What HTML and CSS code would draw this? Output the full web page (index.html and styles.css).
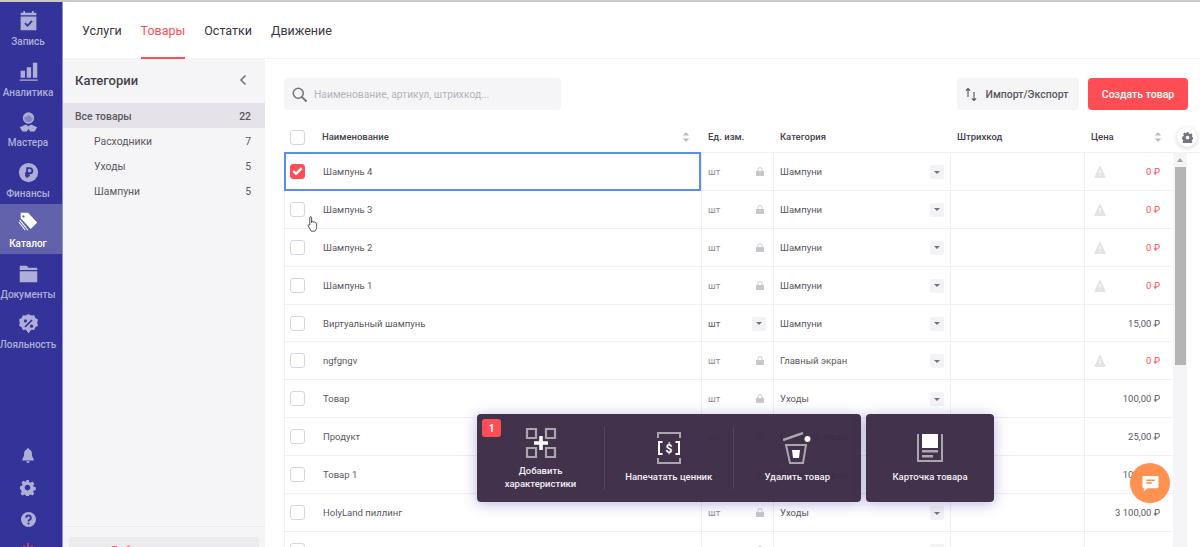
FILE: index.html
```html
<!DOCTYPE html>
<html lang="ru">
  <head>
    <meta charset="UTF-8" />
    <title>Каталог</title>
    <link rel="stylesheet" href="styles.css">
  </head>
  <body>
    <div class="app">
      <!-- Left navigation -->
      <nav class="sidebar">
        <a class="nav-item">
          <svg viewBox="0 0 24 24" width="21" height="21"><path fill="currentColor" d="M6 1h2v2h8V1h2v2h3v3H3V3h3zM3 7.500h18V23H3z"/><path fill="none" stroke="#333399" stroke-width="2" d="M8 15l3 3 5-5.500"/></svg>
          <span>Запись</span>
        </a>
        <a class="nav-item">
          <svg viewBox="0 0 24 24" width="21" height="21"><path fill="currentColor" d="M3 11h5v8H3zM10 7h5v12h-5zM17 2h5v17h-5zM2 21h20.500v1.500H2z"/></svg>
          <span>Аналитика</span>
        </a>
        <a class="nav-item">
          <svg viewBox="0 0 24 24" width="21" height="21"><circle fill="currentColor" cx="12" cy="8" r="6.500"/><path fill="#333399" d="M7 7c2 0 4-1 5-3 1 2 3 3 5 3 0 3-2 5.500-5 5.500S7 10 7 7z" opacity=".35"/><path fill="currentColor" d="M9 15.500l3 2 3-2 7 3-3 5h-5l-2-3-2 3H5l-3-5z"/></svg>
          <span>Мастера</span>
        </a>
        <a class="nav-item">
          <svg viewBox="0 0 24 24" width="21" height="21"><circle fill="currentColor" cx="12" cy="12" r="11"/><path fill="none" stroke="#333399" stroke-width="2.200" d="M10.500 18V7h3a2.800 2.800 0 0 1 0 5.800H8M8 15.500h5.500"/></svg>
          <span>Финансы</span>
        </a>
        <a class="nav-item active">
          <svg viewBox="0 0 24 24" width="22" height="22"><path fill="currentColor" d="M4 2h8l10 10.500-7 7L4 8zM7 4.500a1.300 1.300 0 1 0 .1 0z"/><path fill="none" stroke="currentColor" stroke-width="1.200" d="M3 10l9 11M2 12l7 9"/></svg>
          <span>Каталог</span>
        </a>
        <a class="nav-item">
          <svg viewBox="0 0 24 24" width="21" height="21"><path fill="currentColor" d="M2 3h8l2 2.500h10V8H2zM2 9.500h20V22H2z"/></svg>
          <span>Документы</span>
        </a>
        <a class="nav-item">
          <svg viewBox="0 0 24 24" width="21" height="21"><path fill="currentColor" d="M12 1l3 1.800 3.500-.3 1.300 3.200 3 1.800-.8 3.500.8 3.500-3 1.800-1.300 3.200-3.500-.3L12 23l-3-3.800-3.500.3-1.300-3.200-3-1.800.8-3.500-.8-3.500 3-1.800 1.300-3.200 3.500.3z"/><path fill="none" stroke="#333399" stroke-width="2" d="M8 16l8-8"/><circle fill="#333399" cx="8.500" cy="9" r="1.800"/><circle fill="#333399" cx="15.500" cy="15" r="1.800"/></svg>
          <span>Лояльность</span>
        </a>
        <div class="nav-bottom">
          <svg viewBox="0 0 16 18" width="14" height="16"><path fill="currentColor" d="M8 0a1.500 1.500 0 0 1 1.500 1.500C12 2.300 12.500 4.500 12.500 7c0 2.500.8 3.500 2 5v2h-13v-2c1.200-1.500 2-2.500 2-5 0-2.500.5-4.700 3-5.500A1.500 1.500 0 0 1 8 0zM6 15h4a2 2 0 0 1-4 0z"/></svg>
          <svg viewBox="0 0 16 16" width="16" height="16"><path fill="currentColor" fill-rule="evenodd" d="M6.500 0h3l.4 2.200 1.500.7 2-1.200 2 2.200-1.200 1.900.6 1.500 2.200.5v3l-2.200.4-.6 1.500 1.200 2-2 2-2-1.200-1.500.6-.4 2.300h-3l-.4-2.300-1.500-.6-2 1.200-2-2 1.200-2-.6-1.500L0 9.800v-3l2.200-.5.6-1.500-1.200-1.900 2-2.200 2 1.200 1.500-.7zM8 5.200a3 3 0 1 0 .1 0z" transform="scale(.93)"/></svg>
          <svg viewBox="0 0 16 16" width="15" height="15"><circle fill="currentColor" cx="8" cy="8" r="8"/><path fill="none" stroke="#333399" stroke-width="2" d="M5.500 6.200a2.500 2.500 0 1 1 3.600 2.200c-.8.400-1.100.8-1.100 1.700"/><circle fill="#333399" cx="8" cy="12.300" r="1.100"/></svg>
          <svg viewBox="0 0 16 16" width="14" height="14"><path fill="none" stroke="#ff4d55" stroke-width="1.500" d="M8 0v7M3.500 3v6M12.500 3v6"/></svg>
        </div>
      </nav>

      <div class="content">
        <!-- Top tabs -->
        <header class="tabs">
          <a class="tab">Услуги</a>
          <a class="tab selected">Товары</a>
          <a class="tab">Остатки</a>
          <a class="tab">Движение</a>
        </header>

        <div class="columns">
          <!-- Categories -->
          <aside class="categories">
            <div class="cat-head">
              <h2>Категории</h2>
              <svg viewBox="0 0 10 12" width="10" height="12"><path fill="none" stroke="#77747f" stroke-width="1.600" d="M7.500 1.500L3 6l4.500 4.500"/></svg>
            </div>
            <ul class="cat-list">
              <li class="cat all"><span>Все товары</span><span>22</span></li>
              <li class="cat"><span>Расходники</span><span>7</span></li>
              <li class="cat"><span>Уходы</span><span>5</span></li>
              <li class="cat"><span>Шампуни</span><span>5</span></li>
            </ul>
            <div class="cat-foot"><div class="cat-add">Добавить категорию</div></div>
          </aside>

          <!-- Goods table -->
          <main class="goods">
            <div class="toolbar">
              <label class="search">
                <svg viewBox="0 0 18 18" width="15" height="15"><circle fill="none" stroke="#77747f" stroke-width="1.900" cx="7.500" cy="7.500" r="6"/><path stroke="#77747f" stroke-width="2.400" d="M11.500 11.500l6 6"/></svg>
                <span>Наименование, артикул, штрихкод...</span>
              </label>
              <div class="actions">
                <button class="btn-light">
                  <svg viewBox="0 0 14 16" width="12" height="15"><path fill="none" stroke="#55525c" stroke-width="1.300" d="M3.500 11V1M1 3.500L3.500 1 6 3.500M10.500 5v10M8 12.500l2.500 2.500 2.500-2.500"/></svg>
                  Импорт/Экспорт
                </button>
                <button class="btn-red">Создать товар</button>
              </div>
            </div>

            <div class="table-wrap">
              <div class="thead row-grid">
                <div class="cell name-cell"><i class="check"></i><b>Наименование</b>
                  <svg class="sort" viewBox="0 0 8 12" width="8" height="12"><path fill="#b9b7be" d="M4 1l3 3.500H1zM4 11l3-3.500H1z"/></svg>
                </div>
                <div class="cell"><b>Ед. изм.</b></div>
                <div class="cell"><b>Категория</b></div>
                <div class="cell"><b>Штрихкод</b></div>
                <div class="cell"><b>Цена</b>
                  <svg class="sort" viewBox="0 0 8 12" width="8" height="12"><path fill="#b9b7be" d="M4 1l3 3.500H1zM4 11l3-3.500H1z"/></svg>
                </div>
              </div>

              <div class="tbody">
                <div class="row row-grid focused">
                  <div class="cell name-cell"><i class="check on"><svg viewBox="0 0 14 14" width="14" height="14"><path fill="none" stroke="#fff" stroke-width="2.600" d="M2.500 7l3 3 6-6"/></svg></i>Шампунь 4</div>
                  <div class="cell unit locked">шт<svg class="lock" viewBox="0 0 8 9" width="8" height="9"><path fill="#c9c7cd" d="M0 4h8v5H0z"/><path fill="none" stroke="#c9c7cd" d="M2 4V2.500a2 2 0 0 1 4 0V4"/></svg></div>
                  <div class="cell">Шампуни<i class="drop"></i></div>
                  <div class="cell"></div>
                  <div class="cell price zero"><svg class="warn" viewBox="0 0 12 13" width="12" height="13"><path fill="#e4e2e7" d="M6 0l6 13H0z"/><path fill="#fff" d="M5.500 5h1v4h-1zM5.500 10h1v1h-1z"/></svg>0 ₽</div>
                </div>
                <div class="row row-grid">
                  <div class="cell name-cell"><i class="check"></i>Шампунь 3</div>
                  <div class="cell unit locked">шт<svg class="lock" viewBox="0 0 8 9" width="8" height="9"><path fill="#c9c7cd" d="M0 4h8v5H0z"/><path fill="none" stroke="#c9c7cd" d="M2 4V2.500a2 2 0 0 1 4 0V4"/></svg></div>
                  <div class="cell">Шампуни<i class="drop"></i></div>
                  <div class="cell"></div>
                  <div class="cell price zero"><svg class="warn" viewBox="0 0 12 13" width="12" height="13"><path fill="#e4e2e7" d="M6 0l6 13H0z"/><path fill="#fff" d="M5.500 5h1v4h-1zM5.500 10h1v1h-1z"/></svg>0 ₽</div>
                </div>
                <div class="row row-grid">
                  <div class="cell name-cell"><i class="check"></i>Шампунь 2</div>
                  <div class="cell unit locked">шт<svg class="lock" viewBox="0 0 8 9" width="8" height="9"><path fill="#c9c7cd" d="M0 4h8v5H0z"/><path fill="none" stroke="#c9c7cd" d="M2 4V2.500a2 2 0 0 1 4 0V4"/></svg></div>
                  <div class="cell">Шампуни<i class="drop"></i></div>
                  <div class="cell"></div>
                  <div class="cell price zero"><svg class="warn" viewBox="0 0 12 13" width="12" height="13"><path fill="#e4e2e7" d="M6 0l6 13H0z"/><path fill="#fff" d="M5.500 5h1v4h-1zM5.500 10h1v1h-1z"/></svg>0 ₽</div>
                </div>
                <div class="row row-grid">
                  <div class="cell name-cell"><i class="check"></i>Шампунь 1</div>
                  <div class="cell unit locked">шт<svg class="lock" viewBox="0 0 8 9" width="8" height="9"><path fill="#c9c7cd" d="M0 4h8v5H0z"/><path fill="none" stroke="#c9c7cd" d="M2 4V2.500a2 2 0 0 1 4 0V4"/></svg></div>
                  <div class="cell">Шампуни<i class="drop"></i></div>
                  <div class="cell"></div>
                  <div class="cell price zero"><svg class="warn" viewBox="0 0 12 13" width="12" height="13"><path fill="#e4e2e7" d="M6 0l6 13H0z"/><path fill="#fff" d="M5.500 5h1v4h-1zM5.500 10h1v1h-1z"/></svg>0 ₽</div>
                </div>
                <div class="row row-grid">
                  <div class="cell name-cell"><i class="check"></i>Виртуальный шампунь</div>
                  <div class="cell unit">шт<i class="drop"></i></div>
                  <div class="cell">Шампуни<i class="drop"></i></div>
                  <div class="cell"></div>
                  <div class="cell price">15,00 ₽</div>
                </div>
                <div class="row row-grid">
                  <div class="cell name-cell"><i class="check"></i>ngfgngv</div>
                  <div class="cell unit locked">шт<svg class="lock" viewBox="0 0 8 9" width="8" height="9"><path fill="#c9c7cd" d="M0 4h8v5H0z"/><path fill="none" stroke="#c9c7cd" d="M2 4V2.500a2 2 0 0 1 4 0V4"/></svg></div>
                  <div class="cell">Главный экран<i class="drop"></i></div>
                  <div class="cell"></div>
                  <div class="cell price zero"><svg class="warn" viewBox="0 0 12 13" width="12" height="13"><path fill="#e4e2e7" d="M6 0l6 13H0z"/><path fill="#fff" d="M5.500 5h1v4h-1zM5.500 10h1v1h-1z"/></svg>0 ₽</div>
                </div>
                <div class="row row-grid">
                  <div class="cell name-cell"><i class="check"></i>Товар</div>
                  <div class="cell unit locked">шт<svg class="lock" viewBox="0 0 8 9" width="8" height="9"><path fill="#c9c7cd" d="M0 4h8v5H0z"/><path fill="none" stroke="#c9c7cd" d="M2 4V2.500a2 2 0 0 1 4 0V4"/></svg></div>
                  <div class="cell">Уходы<i class="drop"></i></div>
                  <div class="cell"></div>
                  <div class="cell price">100,00 ₽</div>
                </div>
                <div class="row row-grid">
                  <div class="cell name-cell"><i class="check"></i>Продукт</div>
                  <div class="cell unit locked">шт<svg class="lock" viewBox="0 0 8 9" width="8" height="9"><path fill="#c9c7cd" d="M0 4h8v5H0z"/><path fill="none" stroke="#c9c7cd" d="M2 4V2.500a2 2 0 0 1 4 0V4"/></svg></div>
                  <div class="cell">Главный экран<i class="drop"></i></div>
                  <div class="cell"></div>
                  <div class="cell price">25,00 ₽</div>
                </div>
                <div class="row row-grid">
                  <div class="cell name-cell"><i class="check"></i>Товар 1</div>
                  <div class="cell unit locked">шт<svg class="lock" viewBox="0 0 8 9" width="8" height="9"><path fill="#c9c7cd" d="M0 4h8v5H0z"/><path fill="none" stroke="#c9c7cd" d="M2 4V2.500a2 2 0 0 1 4 0V4"/></svg></div>
                  <div class="cell">Главный экран<i class="drop"></i></div>
                  <div class="cell"></div>
                  <div class="cell price">100,00 ₽</div>
                </div>
                <div class="row row-grid">
                  <div class="cell name-cell"><i class="check"></i>HolyLand пиллинг</div>
                  <div class="cell unit locked">шт<svg class="lock" viewBox="0 0 8 9" width="8" height="9"><path fill="#c9c7cd" d="M0 4h8v5H0z"/><path fill="none" stroke="#c9c7cd" d="M2 4V2.500a2 2 0 0 1 4 0V4"/></svg></div>
                  <div class="cell">Уходы<i class="drop"></i></div>
                  <div class="cell"></div>
                  <div class="cell price">3 100,00 ₽</div>
                </div>
                <div class="row row-grid">
                  <div class="cell name-cell"><i class="check"></i>HolyLand крем-масло</div>
                  <div class="cell unit locked">шт<svg class="lock" viewBox="0 0 8 9" width="8" height="9"><path fill="#c9c7cd" d="M0 4h8v5H0z"/><path fill="none" stroke="#c9c7cd" d="M2 4V2.500a2 2 0 0 1 4 0V4"/></svg></div>
                  <div class="cell">Уходы<i class="drop"></i></div>
                  <div class="cell"></div>
                  <div class="cell price">1 000,00 ₽</div>
                </div>
              </div>

              <div class="scrollbar"><i class="scroll-up"></i><i class="scroll-thumb"></i></div>
            </div>
          </main>
        </div>
      </div>
    </div>

    <!-- Things floating above the table -->
    <div class="gear-btn"><svg viewBox="0 0 16 16" width="11" height="11"><path fill="#77747f" fill-rule="evenodd" d="M6.500 0h3l.4 2.200 1.500.7 2-1.200 2 2.200-1.200 1.900.6 1.500 2.200.5v3l-2.200.4-.6 1.500 1.200 2-2 2-2-1.200-1.500.6-.4 2.300h-3l-.4-2.300-1.500-.6-2 1.200-2-2 1.200-2-.6-1.500L0 9.800v-3l2.200-.5.6-1.500-1.200-1.900 2-2.200 2 1.200 1.500-.7zM8 5.500a2.600 2.600 0 1 0 .1 0z"/></svg></div>

    <svg class="cursor" viewBox="0 0 12 17" width="11" height="16"><path fill="#fff" stroke="#333" stroke-width=".9" d="M3 1.500a1 1 0 0 1 2 0V7l.2-1.300a1 1 0 0 1 1.600.3l.2.700.3-.3a1 1 0 0 1 1.500.5l.1.400a1 1 0 0 1 1.600.8V12c0 2-1 3-1.600 4.300H4.500L1.300 10.500c-.6-1 .5-2 1.700-.8z"/></svg>

    <div class="popup">
      <div class="popup-panel">
        <span class="count">1</span>
        <div class="action wide">
          <svg viewBox="0 0 32 32" width="32" height="32"><path fill="none" stroke="#aaa6ad" stroke-width="2.200" d="M2 2h9v9H2zM21 2h9v9h-9zM2 21h9v9H2zM21 21h9v9h-9z"/><path stroke="#fff" stroke-width="3.600" d="M16 9v14M9 16h14"/></svg>
          <span>Добавить характеристики</span>
        </div>
        <div class="action">
          <svg viewBox="0 0 24 32" width="24" height="32"><path fill="none" stroke="#aaa6ad" stroke-width="2" d="M1 6V1h22v5M1 26v5h22v-5"/><path fill="none" stroke="#fff" stroke-width="2" d="M5.500 10H2v12h3.500M18.500 10H22v12h-3.500"/><text x="12" y="20.500" class="dollar">$</text></svg>
          <span>Напечатать ценник</span>
        </div>
        <div class="action">
          <svg viewBox="0 0 28 32" width="28" height="32"><path fill="none" stroke="#aaa6ad" stroke-width="2" d="M3 13h20l-3 18H7z"/><path stroke="#aaa6ad" stroke-width="2.400" d="M0 8L20 1"/><path fill="#fff" d="M9 18h8l-1 8h-6z"/><circle fill="#fff" cx="24.500" cy="7" r="3"/></svg>
          <span>Удалить товар</span>
        </div>
      </div>
      <div class="popup-panel card">
        <div class="action">
          <svg viewBox="0 0 26 32" width="26" height="32"><path fill="none" stroke="#aaa6ad" stroke-width="2" d="M1 2v27h24V2"/><path fill="#fff" d="M5 2h16v14H5z"/><path fill="#aaa6ad" d="M5 18h16v2.500H5zM5 23h11v2.500H5z"/></svg>
          <span>Карточка товара</span>
        </div>
      </div>
    </div>

    <div class="chat-btn"><svg viewBox="0 0 18 18" width="17" height="17"><path fill="#fff" d="M2 1h14a1.500 1.500 0 0 1 1.500 1.500v10A1.500 1.500 0 0 1 16 14H6l-4 3.500V14a1.500 1.500 0 0 1-1.500-1.500v-10A1.500 1.500 0 0 1 2 1z"/><path stroke="#ff8c4a" stroke-width="1.500" d="M4.500 5.500h9M4.500 8.500h6"/></svg></div>
  </body>
</html>
```

FILE: styles.css
```css
:root {
  --nav-bg: #333399;
  --nav-text: #aeaed8;
  --red: #ff4d55;
  --text: #5a5760;
  --line: #f1eef5;
  --panel: #f5f5f7;
}
* {
  box-sizing: border-box;
}
html,
body {
  margin: 0;
  height: 547px;
  overflow: hidden;
}
body {
  position: relative;
  font-family: Roboto, "Liberation Sans", sans-serif;
  font-size: 9.5px;
  color: var(--text);
  background: #fff;
}
.app {
  display: flex;
  height: 547px;
  border-top: 2px solid #c9c9c9;
}

/* Sidebar */
.sidebar {
  width: 63px;
  flex: none;
  display: flex;
  flex-direction: column;
  background: var(--nav-bg);
  color: var(--nav-text);
  border-right: 1px solid #8e8ec8;
}
.nav-item {
  height: 50.5px;
  flex: none;
  display: flex;
  flex-direction: column;
  align-items: center;
  justify-content: flex-end;
  gap: 5px;
  padding: 0 6px 5px 0;
  font-size: 10px;
  font-weight: 500;
  white-space: nowrap;
}
.nav-item svg {
  flex: none;
}
.nav-item:first-child {
  height: 50px;
}
.nav-item.active {
  background: #6262ac;
  color: #fff;
}
.nav-bottom {
  margin-top: auto;
  display: flex;
  flex-direction: column;
  align-items: center;
  gap: 16px;
  height: 100px;
  padding: 1px 6px 0 0;
}
.nav-bottom svg {
  flex: none;
}

/* Content */
.content {
  flex: 1;
  display: flex;
  flex-direction: column;
  min-width: 0;
}
.tabs {
  height: 57px;
  flex: none;
  display: flex;
  gap: 19px;
  padding-left: 19px;
  border-bottom: 1px solid #f2f2f4;
}
.tab {
  display: flex;
  align-items: center;
  height: 57px;
  padding-top: 2px;
  font-size: 12.5px;
  color: #3a3740;
  border-bottom: 2px solid transparent;
}
.tab.selected {
  color: var(--red);
  border-bottom-color: var(--red);
}
.columns {
  flex: 1;
  display: flex;
  min-height: 0;
}

/* Categories */
.categories {
  width: 202px;
  flex: none;
  display: flex;
  flex-direction: column;
  background: var(--panel);
}
.cat-head {
  height: 44px;
  flex: none;
  display: flex;
  align-items: center;
  justify-content: space-between;
  padding: 0 17px 2px 12px;
}
.cat-head h2 {
  margin: 0;
  font-size: 13px;
  font-weight: 500;
  color: #45424c;
}
.cat-list {
  list-style: none;
  margin: 0;
  padding: 0;
}
.cat {
  height: 25px;
  display: flex;
  align-items: center;
  justify-content: space-between;
  padding: 1px 14px 0 31px;
  font-size: 10.4px;
}
.cat.all {
  padding-left: 12px;
  background: #e5e3e9;
  font-weight: 500;
}
.cat-foot {
  margin-top: auto;
  height: 21px;
  flex: none;
  overflow: hidden;
  padding: 10px 6px 0;
  border-top: 1px solid #e9e9f2;
}
.cat-add {
  height: 24px;
  padding-top: 7px;
  border-radius: 4px;
  background: #ecebf0;
  color: var(--red);
  font-size: 11px;
  text-align: center;
}

/* Goods */
.goods {
  flex: 1;
  min-width: 0;
  padding: 19px 0 0 19px;
}
.toolbar {
  display: flex;
  justify-content: space-between;
  padding-right: 12px;
  height: 32px;
  margin-bottom: 13px;
}
.search {
  width: 277px;
  display: flex;
  align-items: center;
  gap: 7px;
  padding-left: 8px;
  border-radius: 4px;
  background: var(--panel);
  font-size: 10.3px;
  color: #b4b2ba;
}
.actions {
  display: flex;
  gap: 9px;
}
.actions button {
  height: 32px;
  border: none;
  border-radius: 4px;
  font-family: inherit;
  font-size: 10.5px;
  font-weight: 500;
}
.btn-light {
  width: 122px;
  display: flex;
  align-items: center;
  justify-content: center;
  gap: 8px;
  padding-right: 8px;
  background: var(--panel);
  color: var(--text);
}
.btn-red {
  width: 100px;
  background: var(--red);
  color: #fff;
}
.table-wrap {
  position: relative;
}
.row-grid {
  display: grid;
  grid-template-columns: 417px 72px 177px 134px 89px;
}
.thead {
  height: 30px;
  border-bottom: 1px solid var(--line);
}
.thead b {
  margin-top: -2px;
  font-weight: 500;
  color: #45424c;
}
.tbody {
  width: 889px;
}
.row {
  height: 37.9px;
  grid-template-columns: 416px 72px 177px 134px 89px;
  border-bottom: 1px solid var(--line);
  border-left: 1px solid var(--line);
}
.row.focused {
  position: relative;
}
.row.focused::before {
  content: "";
  box-sizing: border-box;
  position: absolute;
  left: -1px;
  top: -1px;
  width: 417px;
  height: 39px;
  border: 2px solid #5b8def;
}
.cell {
  position: relative;
  display: flex;
  align-items: center;
  min-width: 0;
  padding-left: 6px;
  border-left: 1px solid var(--line);
}
.thead .cell {
  padding-left: 7px;
  border-left: none;
}
.thead .cell.name-cell,
.cell.name-cell {
  padding-left: 5px;
  border-left: none;
}
.check {
  flex: none;
  width: 15px;
  height: 15px;
  margin-right: 18px;
  border: 1.5px solid #d6d4e2;
  border-radius: 3px;
  background: #fff;
}
.check.on {
  display: flex;
  align-items: center;
  justify-content: center;
  border-color: var(--red);
  background: var(--red);
}
.thead .check {
  margin: 0 17px 0 1px;
}
.sort {
  position: absolute;
  right: 11px;
  top: 8px;
}
.unit {
  color: #5a5760;
}
.unit.locked {
  color: #8d8a94;
}
.lock {
  position: absolute;
  right: 9px;
  top: 14px;
}
.drop {
  position: absolute;
  right: 6px;
  top: 12px;
  width: 14px;
  height: 14px;
  border-radius: 2px;
  background: #f3f2f5;
}
.unit .drop {
  right: 7px;
}
.drop::after {
  content: "";
  position: absolute;
  left: 3.5px;
  top: 5.5px;
  border: 3.5px solid transparent;
  border-top: 3.5px solid #77747f;
  border-bottom: none;
}
.price {
  justify-content: flex-end;
  padding-right: 13px;
}
.price.zero {
  color: var(--red);
}
.warn {
  position: absolute;
  left: 9px;
  top: 12px;
}
.scrollbar {
  position: absolute;
  left: 889px;
  top: 29px;
  width: 14px;
  height: 400px;
  background: var(--panel);
}
.scroll-up {
  position: absolute;
  left: 3.5px;
  top: 6px;
  border: 3.5px solid transparent;
  border-bottom: 4px solid #a3a3a3;
  border-top: none;
}
.scroll-thumb {
  position: absolute;
  left: 2px;
  right: 1px;
  top: 15px;
  height: 198px;
  background: #b5b5b5;
}

/* Floating items */
.gear-btn {
  position: absolute;
  left: 1177px;
  top: 127px;
  width: 20px;
  height: 20px;
  display: flex;
  align-items: center;
  justify-content: center;
  border-radius: 50%;
  background: #fff;
  box-shadow: 0 1px 4px rgba(60, 50, 90, 0.25);
}
.cursor {
  position: absolute;
  left: 307px;
  top: 216px;
}
.popup {
  position: absolute;
  left: 477px;
  top: 414px;
  display: flex;
  gap: 5px;
}
.popup-panel {
  position: relative;
  width: 384px;
  height: 88px;
  display: flex;
  padding: 13px 0;
  border-radius: 4px;
  background: rgba(58, 42, 68, 0.96);
  box-shadow: 0 2px 14px rgba(60, 50, 150, 0.35);
  color: #f1eff3;
}
.popup-panel.card {
  width: 128px;
}
.count {
  position: absolute;
  left: 5px;
  top: 5px;
  width: 19px;
  height: 18px;
  display: flex;
  align-items: center;
  justify-content: center;
  border-radius: 3px;
  background: var(--red);
  color: #fff;
  font-size: 10px;
  font-weight: 700;
}
.action {
  flex: 1;
  display: flex;
  flex-direction: column;
  align-items: center;
  gap: 6px;
  padding-top: 5px;
  font-size: 9.5px;
  font-weight: 500;
  line-height: 13px;
  text-align: center;
  border-left: 1px solid #54465c;
}
.action svg {
  flex: none;
}
.action.wide,
.card .action {
  border-left: none;
}
.action.wide {
  flex: none;
  width: 127px;
  padding: 0 20px;
  gap: 6px;
  line-height: 12.5px;
}
.dollar {
  fill: #fff;
  font-size: 12px;
  font-weight: 700;
  text-anchor: middle;
}
.chat-btn {
  position: absolute;
  left: 1130px;
  top: 463px;
  width: 40px;
  height: 40px;
  display: flex;
  align-items: center;
  justify-content: center;
  border-radius: 50%;
  background: rgba(255, 140, 74, 0.96);
}
```
